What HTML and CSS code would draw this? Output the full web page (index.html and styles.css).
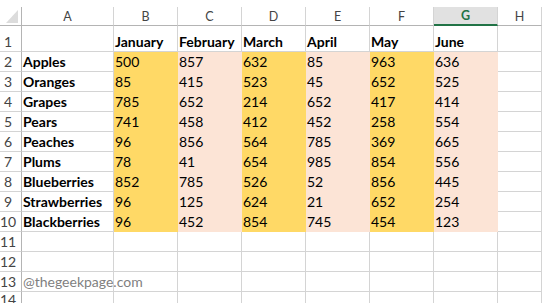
FILE: index.html
```html
<!DOCTYPE html>
<html>
<head>
<meta charset="utf-8">
<link rel="stylesheet" href="styles.css">
</head>
<body>
<div class="sheet">
  <div class="corner"><span class="tri"></span></div>
  <div class="ch">A</div><div class="ch">B</div><div class="ch">C</div><div class="ch">D</div><div class="ch">E</div><div class="ch">F</div><div class="ch sel">G</div><div class="ch">H</div>

  <div class="rh">1</div><div class="c"></div><div class="c b">January</div><div class="c b">February</div><div class="c b">March</div><div class="c b">April</div><div class="c b">May</div><div class="c b">June</div><div class="c"></div>

  <div class="rh">2</div><div class="c b">Apples</div><div class="c y">500</div><div class="c p">857</div><div class="c y">632</div><div class="c p">85</div><div class="c y">963</div><div class="c p">636</div><div class="c"></div>
  <div class="rh">3</div><div class="c b">Oranges</div><div class="c y">85</div><div class="c p">415</div><div class="c y">523</div><div class="c p">45</div><div class="c y">652</div><div class="c p">525</div><div class="c"></div>
  <div class="rh">4</div><div class="c b">Grapes</div><div class="c y">785</div><div class="c p">652</div><div class="c y">214</div><div class="c p">652</div><div class="c y">417</div><div class="c p">414</div><div class="c"></div>
  <div class="rh">5</div><div class="c b">Pears</div><div class="c y">741</div><div class="c p">458</div><div class="c y">412</div><div class="c p">452</div><div class="c y">258</div><div class="c p">554</div><div class="c"></div>
  <div class="rh">6</div><div class="c b">Peaches</div><div class="c y">96</div><div class="c p">856</div><div class="c y">564</div><div class="c p">785</div><div class="c y">369</div><div class="c p">665</div><div class="c"></div>
  <div class="rh">7</div><div class="c b">Plums</div><div class="c y">78</div><div class="c p">41</div><div class="c y">654</div><div class="c p">985</div><div class="c y">854</div><div class="c p">556</div><div class="c"></div>
  <div class="rh">8</div><div class="c b">Blueberries</div><div class="c y">852</div><div class="c p">785</div><div class="c y">526</div><div class="c p">52</div><div class="c y">856</div><div class="c p">445</div><div class="c"></div>
  <div class="rh">9</div><div class="c b">Strawberries</div><div class="c y">96</div><div class="c p">125</div><div class="c y">624</div><div class="c p">21</div><div class="c y">652</div><div class="c p">254</div><div class="c"></div>
  <div class="rh">10</div><div class="c b">Blackberries</div><div class="c y">96</div><div class="c p">452</div><div class="c y">854</div><div class="c p">745</div><div class="c y">454</div><div class="c p">123</div><div class="c"></div>

  <div class="rh">11</div><div class="c"></div><div class="c"></div><div class="c"></div><div class="c"></div><div class="c"></div><div class="c"></div><div class="c"></div><div class="c"></div>
  <div class="rh">12</div><div class="c"></div><div class="c"></div><div class="c"></div><div class="c"></div><div class="c"></div><div class="c"></div><div class="c"></div><div class="c"></div>
  <div class="rh">13</div><div class="c wm">@thegeekpage.com</div><div class="c"></div><div class="c"></div><div class="c"></div><div class="c"></div><div class="c"></div><div class="c"></div><div class="c"></div>
  <div class="rh">14</div><div class="c"></div><div class="c"></div><div class="c"></div><div class="c"></div><div class="c"></div><div class="c"></div><div class="c"></div><div class="c"></div>
</div>
</body>
</html>
```

FILE: styles.css
```css
html, body {
  margin: 0;
  padding: 0;
  background: #ffffff;
}
body {
  width: 542px;
  height: 303px;
  overflow: hidden;
  padding-top: 7px;
  box-sizing: border-box;
  font-family: Lato, "Liberation Sans", sans-serif;
}
.sheet {
  display: grid;
  grid-template-columns: 22px 92px repeat(6, 64px) 1fr;
  grid-template-rows: 19px 26px repeat(12, 20px);
}
.sheet > div {
  box-sizing: border-box;
  border-right: 1px solid #d4d4d4;
  border-bottom: 1px solid #d4d4d4;
  display: flex;
  align-items: flex-end;
  white-space: nowrap;
  overflow: visible;
}
.sheet > .corner {
  border-right-color: #b4b4b4;
  border-bottom-color: #b4b4b4;
  position: relative;
}
.tri {
  position: absolute;
  right: 3px;
  bottom: 2px;
  width: 0;
  height: 0;
  border-left: 12px solid transparent;
  border-bottom: 13px solid #dcdcdc;
}
.sheet > .ch {
  border-bottom-color: #b4b4b4;
  justify-content: center;
  align-items: center;
  font-size: 12.5px;
  color: #444444;
}
.sheet > .ch.sel {
  background: #e1e1e1;
  border-bottom: 2px solid #217346;
  color: #217346;
  font-weight: 700;
}
.sheet > .rh {
  border-right-color: #b4b4b4;
  justify-content: center;
  padding-right: 5px;
  padding-bottom: 1px;
  font-size: 14px;
  line-height: 16px;
  color: #444444;
}
.c {
  font-size: 14px;
  line-height: 16px;
  padding: 0 0 1px 1px;
  color: #000000;
}
.b {
  font-weight: 700;
}
.sheet > .y {
  background: #ffd966;
  border-color: transparent;
}
.sheet > .p {
  background: #fce4d6;
  border-color: transparent;
}
.wm {
  color: #7f7f7f;
}
```
